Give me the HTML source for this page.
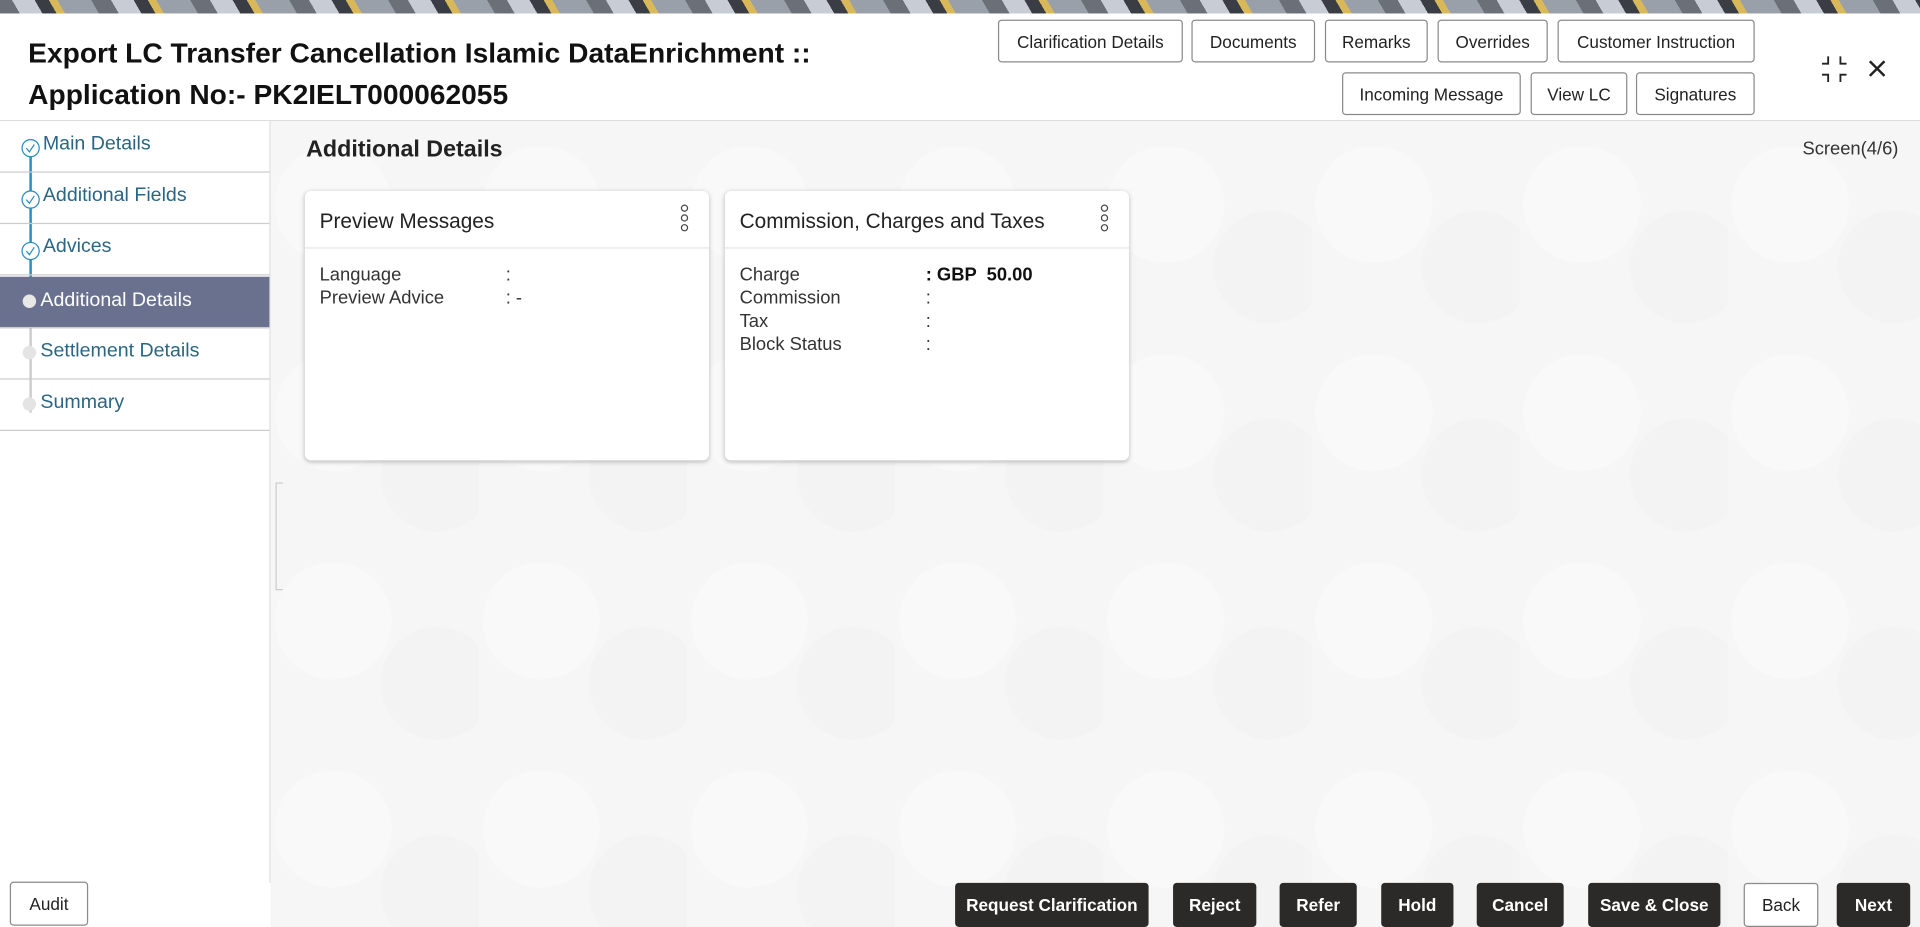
<!DOCTYPE html>
<html><head><meta charset="utf-8"><style>
*{box-sizing:border-box;margin:0;padding:0}
html,body{width:1920px;height:927px;overflow:hidden;background:#fff;font-family:"Liberation Sans",sans-serif}
#w{position:absolute;left:0;top:0;width:1568px;height:757px;transform:scale(1.22449);transform-origin:0 0;background:#fff}
.strip{position:absolute;left:0;top:0;width:1568px;height:11px;background:repeating-linear-gradient(60deg,#6b6f78 0 14px,#c8ccd4 14px 30px,#3a3d44 30px 40px,#d9b85a 40px 46px,#9aa0aa 46px 70px)}
.modal{position:absolute;left:1px;top:11px;width:1566px;height:746px;background:#fff;border-radius:4px 4px 0 0}
.title{position:absolute;left:23px;top:26px;font-size:23px;font-weight:bold;color:#111;line-height:34px}
.btn{position:absolute;height:35px;border:1px solid #8a8a8a;border-radius:3px;background:#fff;font-size:14px;color:#222;display:flex;align-items:center;justify-content:center}
.hline{position:absolute;left:0;top:98px;width:1568px;height:1px;background:#ddd}
.side{position:absolute;left:0;top:99px;width:221px;height:622px;background:#fff;border-right:1px solid #ddd}
.it{position:absolute;left:0;width:220px;height:42px;border-bottom:1px solid #ccc;font-size:16px;color:#2a6683;padding-left:35px;line-height:38px}
.content{position:absolute;left:221px;top:99px;width:1347px;height:658px;background:#f6f6f6;background-image:radial-gradient(circle at 30% 40%,#f9f9f9 0 30%,transparent 31%),radial-gradient(circle at 80% 70%,#f3f3f3 0 25%,transparent 26%);background-size:170px 170px}
.card{position:absolute;top:156px;width:330px;height:220px;background:#fff;border-radius:5px;box-shadow:0 1px 4px rgba(0,0,0,.25)}
.card h3{font-size:17px;font-weight:normal;color:#222;position:absolute;left:12px;top:15px}
.card .sep{position:absolute;left:0;top:46px;width:100%;height:1px;background:#e4e4e4}
.dots{position:absolute;right:17px;top:11px;width:6px}
.dots i{display:block;width:6px;height:6px;border:1px solid #444;border-radius:50%;margin-bottom:2px}
.row{position:absolute;left:12px;font-size:15px;color:#333}
.fb{position:absolute;top:721px;height:36px;border-radius:3px;background:#2c2a29;color:#fff;font-size:14px;font-weight:bold;display:flex;align-items:center;justify-content:center}
</style></head><body><div id="w">
<div class="strip"></div>
<div class="modal"></div>
<div class="title">Export LC Transfer Cancellation Islamic DataEnrichment ::<br>Application No:- PK2IELT000062055</div>
<div class="btn" style="left:815px;top:16px;width:151px">Clarification Details</div>
<div class="btn" style="left:973px;top:16px;width:101px">Documents</div>
<div class="btn" style="left:1082px;top:16px;width:84px">Remarks</div>
<div class="btn" style="left:1174px;top:16px;width:90px">Overrides</div>
<div class="btn" style="left:1272px;top:16px;width:161px">Customer Instruction</div>
<div class="btn" style="left:1096px;top:59px;width:146px">Incoming Message</div>
<div class="btn" style="left:1250px;top:59px;width:79px">View LC</div>
<div class="btn" style="left:1336px;top:59px;width:97px">Signatures</div>
<svg style="position:absolute;left:1487px;top:45px" width="60" height="24" viewBox="0 0 60 24" fill="none" stroke="#222" stroke-width="1.5"><path d="M6 1v6H1M16 1v6h5M6 22v-6H1M16 22v-6h5"/><path d="M40 5l12 12M52 5L40 17" stroke-width="2"/></svg>
<div class="hline"></div>
<div class="side">
<div style="position:absolute;left:24px;top:22px;width:2px;height:126px;background:#2a8bbd"></div>
<div style="position:absolute;left:24px;top:148px;width:2px;height:90px;background:#ccc"></div>
<div class="it" style="top:0">Main Details</div>
<div class="it" style="top:42px">Additional Fields</div>
<div class="it" style="top:84px">Advices</div>
<div class="it" style="top:127px;background:#69718f;color:#fff;padding-left:33px;height:42px;line-height:40px">Additional Details</div>
<div class="it" style="top:169px;padding-left:33px">Settlement Details</div>
<div class="it" style="top:211px;padding-left:33px">Summary</div>
<svg style="position:absolute;left:16px;top:12px" width="20" height="240" fill="#fff" stroke="#2a8bbd" stroke-width="1"><circle cx="9" cy="10" r="7"/><path d="M5.5 10l2.5 3 4-6"/><circle cx="9" cy="52" r="7"/><path d="M5.5 52l2.5 3 4-6"/><circle cx="9" cy="94" r="7"/><path d="M5.5 94l2.5 3 4-6"/><circle cx="8" cy="135" r="5.5" fill="#e8e8e8" stroke="none"/><circle cx="8" cy="177" r="5.5" fill="#e4e4e4" stroke="none"/><circle cx="8" cy="219" r="5.5" fill="#e4e4e4" stroke="none"/></svg>
</div>
<div class="content"></div>
<div style="position:absolute;left:225px;top:394px;width:6px;height:88px;border:1px solid #ccc;border-right:none"></div>
<div style="position:absolute;left:250px;top:112px;font-size:19px;font-weight:bold;color:#222">Additional Details</div>
<div style="position:absolute;left:1472px;top:113px;font-size:15px;color:#333">Screen(4/6)</div>
<div class="card" style="left:249px">
<h3>Preview Messages</h3><div class="dots"><i></i><i></i><i></i></div><div class="sep"></div>
<div class="row" style="top:60px">Language</div><div class="row" style="left:164px;top:60px">:</div>
<div class="row" style="top:79px">Preview Advice</div><div class="row" style="left:164px;top:79px">: -</div>
</div>
<div class="card" style="left:592px">
<h3>Commission, Charges and Taxes</h3><div class="dots"><i></i><i></i><i></i></div><div class="sep"></div>
<div class="row" style="top:60px">Charge</div><div class="row" style="left:164px;top:60px;font-weight:bold;color:#111">: GBP &nbsp;50.00</div>
<div class="row" style="top:79px">Commission</div><div class="row" style="left:164px;top:79px">:</div>
<div class="row" style="top:98px">Tax</div><div class="row" style="left:164px;top:98px">:</div>
<div class="row" style="top:117px">Block Status</div><div class="row" style="left:164px;top:117px">:</div>
</div>
<div class="btn" style="left:8px;top:720px;width:64px;height:36px">Audit</div>
<div class="fb" style="left:780px;width:158px">Request Clarification</div>
<div class="fb" style="left:958px;width:68px">Reject</div>
<div class="fb" style="left:1045px;width:63px">Refer</div>
<div class="fb" style="left:1128px;width:59px">Hold</div>
<div class="fb" style="left:1206px;width:71px">Cancel</div>
<div class="fb" style="left:1297px;width:108px">Save &amp; Close</div>
<div class="btn" style="left:1424px;top:721px;width:61px;height:36px">Back</div>
<div class="fb" style="left:1500px;width:60px">Next</div>
</div></body></html>
